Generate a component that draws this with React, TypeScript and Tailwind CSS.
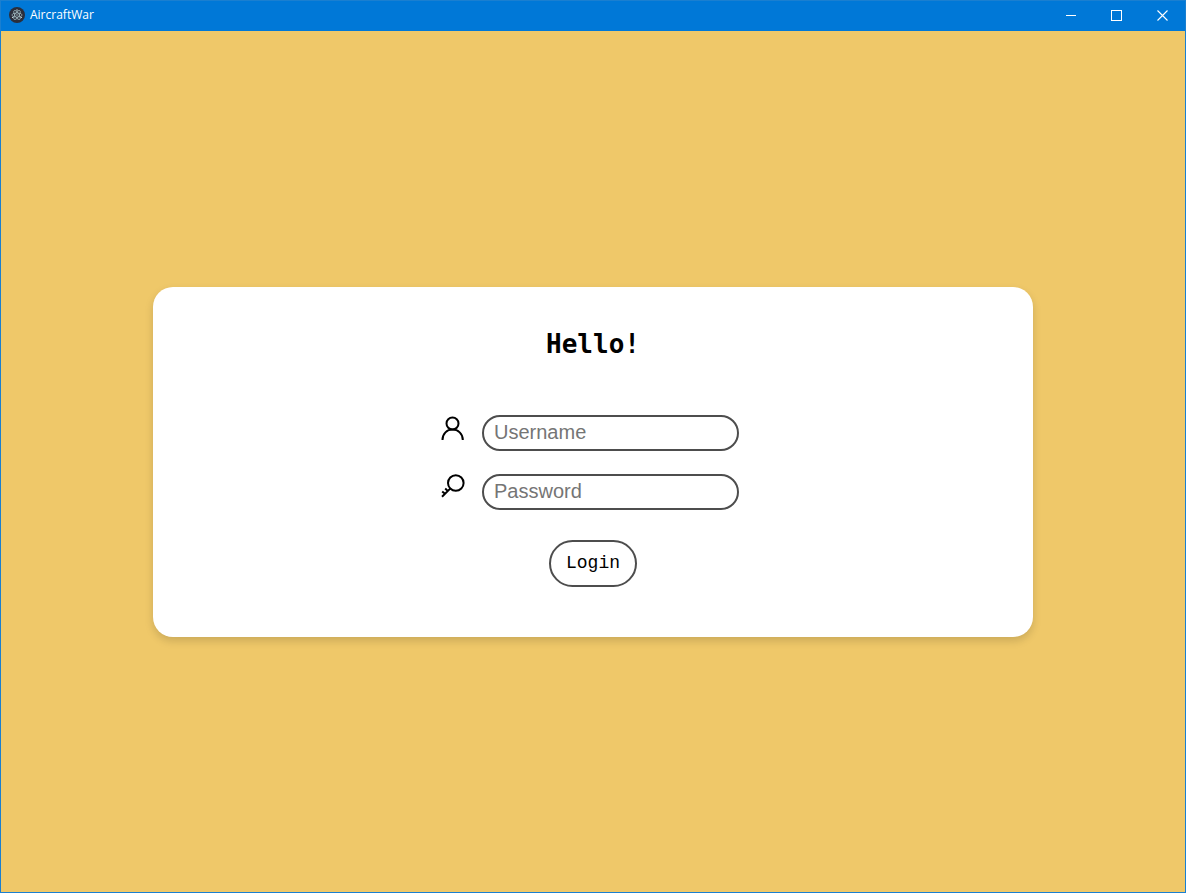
import { useState } from "react";

function AppIcon() {
  return (
    <svg viewBox="0 0 16 16" className="size-4" aria-hidden="true">
      <circle cx="8" cy="8" r="8" fill="#2b2e3b" />
      <g fill="none" stroke="#a9c3c8" strokeWidth="0.7">
        <ellipse cx="8" cy="8" rx="5.2" ry="2" />
        <ellipse cx="8" cy="8" rx="5.2" ry="2" transform="rotate(60 8 8)" />
        <ellipse cx="8" cy="8" rx="5.2" ry="2" transform="rotate(120 8 8)" />
      </g>
      <circle cx="8" cy="8" r="1.6" fill="#2b2e3b" />
      <g fill="#c3d6d8">
        <circle cx="8" cy="8" r="0.7" />
        <circle cx="3.6" cy="10.4" r="0.7" />
        <circle cx="12.3" cy="10.4" r="0.7" />
        <circle cx="8" cy="3" r="0.7" />
      </g>
    </svg>
  );
}

function UserIcon() {
  return (
    <svg viewBox="0 0 24 24" className="size-6" fill="none" stroke="#000" strokeWidth="2" aria-hidden="true">
      <circle cx="11.5" cy="7.5" r="6" />
      <path d="M1.5 24C1.5 17.5 6 13.6 11.5 13.6S21.8 17.5 21.8 24" />
    </svg>
  );
}

function KeyIcon() {
  return (
    <svg viewBox="0 0 24 24" className="size-6" fill="none" stroke="#000" strokeWidth="2" aria-hidden="true">
      <circle cx="14.8" cy="9" r="7.8" />
      <path d="M9.2 14.6L1 22.8M6.8 17L4.2 14.6M4 19.8L1.2 17.4" />
    </svg>
  );
}

function TitleBar() {
  return (
    <header className="flex h-[30px] items-center justify-between bg-[#0078d7] text-white">
      <div className="flex h-7 items-center gap-[5px] self-start pl-2">
        <AppIcon />
        <span className="font-['Open_Sans',sans-serif] text-xs">AircraftWar</span>
      </div>
      <div className="flex h-7 self-start">
        <button type="button" aria-label="Minimize" className="flex w-[46px] items-center justify-center">
          <svg viewBox="0 0 11 11" className="size-[11px]" stroke="#fff" shapeRendering="crispEdges">
            <path d="M0 5.5H10" />
          </svg>
        </button>
        <button type="button" aria-label="Maximize" className="flex w-[45px] items-center justify-center">
          <svg viewBox="0 0 11 11" className="size-[11px]" fill="none" stroke="#fff" shapeRendering="crispEdges">
            <path d="M.5 .5H10.5V10.5H.5Z" />
          </svg>
        </button>
        <button type="button" aria-label="Close" className="flex w-[46px] items-center justify-center">
          <svg viewBox="0 0 11 11" className="size-[11px]" stroke="#fff" strokeWidth="1.1">
            <path d="M.5 .5L10.5 10.5M10.5 .5L.5 10.5" />
          </svg>
        </button>
      </div>
    </header>
  );
}

const fieldClass =
  "h-9 w-[257px] rounded-full border-2 border-[#4d4d4d] bg-white px-[10px] font-['Liberation_Sans',Arial,sans-serif] text-xl text-black outline-none placeholder:text-[#757575]";

export default function App() {
  const [username, setUsername] = useState("");
  const [password, setPassword] = useState("");

  return (
    <div className="flex min-h-screen flex-col border border-[#1a7fd0] bg-[#efc869]">
      <TitleBar />
      <main className="flex grow items-center justify-center">
        <form
          onSubmit={(event) => event.preventDefault()}
          className="flex w-[880px] max-w-full flex-col items-center rounded-[20px] bg-white pt-9 pb-[50px] shadow-[0_4px_8px_rgba(0,0,0,0.15)]"
        >
          <h1 className="font-['DejaVu_Sans_Mono',monospace] text-[26px] leading-[42px] font-bold text-black">
            Hello!
          </h1>
          <div className="mt-[50px] flex flex-col gap-[23px] pr-[6px]">
            <div className="flex items-start gap-[17px]">
              <label htmlFor="username" aria-label="Username" className="pt-[1px]">
                <UserIcon />
              </label>
              <input
                id="username"
                type="text"
                placeholder="Username"
                value={username}
                onChange={(event) => setUsername(event.target.value)}
                className={fieldClass}
              />
            </div>
            <div className="flex items-start gap-[17px]">
              <label htmlFor="password" aria-label="Password">
                <KeyIcon />
              </label>
              <input
                id="password"
                type="password"
                placeholder="Password"
                value={password}
                onChange={(event) => setPassword(event.target.value)}
                className={fieldClass}
              />
            </div>
          </div>
          <button
            type="submit"
            className="mt-[30px] h-[47px] w-[88px] rounded-full border-2 border-[#4d4d4d] bg-white font-['Liberation_Mono',monospace] text-lg text-black"
          >
            Login
          </button>
        </form>
      </main>
    </div>
  );
}
